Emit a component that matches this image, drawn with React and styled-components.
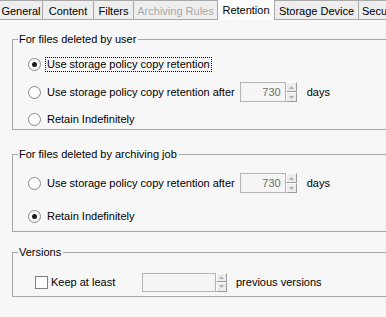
import React from "react";
import styled, { createGlobalStyle } from "styled-components";

const Global = createGlobalStyle`
  html, body { margin: 0; padding: 0; }
  body {
    background: #f7f7f7;
    font-family: "Liberation Sans", Arial, sans-serif;
    font-size: 11px;
    color: #000;
    overflow: hidden;
    width: 386px;
    height: 317px;
  }
`;

const Page = styled.div`
  width: 386px;
  height: 317px;
  overflow: hidden;
  background: #f7f7f7;
`;

const TabStrip = styled.div`
  display: flex;
  height: 20px;
  white-space: nowrap;
`;

const Tab = styled.div`
  flex: none;
  box-sizing: border-box;
  width: ${(p) => p.$w}px;
  height: 20px;
  display: flex;
  align-items: center;
  justify-content: ${(p) => (p.$last ? "flex-start" : "center")};
  padding-left: ${(p) => (p.$last ? 3 : 0)}px;
  background: ${(p) => (p.$active ? "#fdfdfd" : "#eeeeee")};
  border: 1px solid #a8a8a8;
  border-bottom: ${(p) => (p.$active ? "none" : "1px solid #a8a8a8")};
  border-top: ${(p) => (p.$active ? "none" : "1px solid #a8a8a8")};
  border-left: ${(p) => (p.$first ? "none" : "1px solid #a8a8a8")};
  border-right: ${(p) => (p.$last ? "none" : "1px solid #a8a8a8")};
  color: ${(p) => (p.$disabled ? "#a9a9a9" : "#000")};
  padding-top: ${(p) => (p.$active ? 0 : 1)}px;
  overflow: hidden;
  margin-left: ${(p) => (p.$first ? 0 : -1)}px;
`;

const Panel = styled.div`
  padding: 13px 0 0 12px;
  display: flex;
  flex-direction: column;
`;

const Group = styled.fieldset`
  margin: ${(p) => p.$mt || 0}px 0 0 0;
  width: 400px;
  box-sizing: border-box;
  border: 1px solid #a6a6a6;
  padding: ${(p) => p.$pt}px 0 ${(p) => p.$pb}px 5px;
  min-width: 0;
`;

const Legend = styled.legend`
  padding: 0 2px 0 1px;
  line-height: 13px;
  height: 13px;
`;

const Rows = styled.div`
  display: flex;
  flex-direction: column;
  gap: ${(p) => p.$gap}px;
  padding-left: ${(p) => p.$indent}px;
`;

const Row = styled.div`
  display: flex;
  align-items: center;
  height: 20px;
  margin-top: ${(p) => p.$mt || 0}px;
`;

const RadioCircle = styled.span`
  flex: none;
  box-sizing: border-box;
  width: 13px;
  height: 13px;
  border-radius: 50%;
  border: 1px solid #8a8a8a;
  background: radial-gradient(circle at 40% 40%, #ffffff 0%, #ffffff 45%, #e4e4e4 100%);
  display: flex;
  align-items: center;
  justify-content: center;
  margin-right: 4px;
  &::after {
    content: "";
    width: 5px;
    height: 5px;
    border-radius: 50%;
    background: #1c1c1c;
    display: ${(p) => (p.$checked ? "block" : "none")};
  }
`;

const CheckBox = styled.span`
  flex: none;
  box-sizing: border-box;
  width: 13px;
  height: 13px;
  border: 1px solid #7f7f7f;
  background: #fff;
  margin-right: 1px;
`;

const Label = styled.span`
  white-space: nowrap;
  line-height: 13px;
  padding: 0 1px;
  border: 1px dotted ${(p) => (p.$focus ? "#000" : "transparent")};
  width: ${(p) => (p.$w ? `${p.$w}px` : "auto")};
  flex: none;
`;

const Spin = styled.div`
  display: flex;
  margin-left: ${(p) => p.$ml}px;
  margin-right: ${(p) => p.$mr}px;
`;

const Field = styled.div`
  box-sizing: border-box;
  width: ${(p) => p.$w}px;
  height: ${(p) => p.$h}px;
  border: 1px solid #b4b4b4;
  background: #f5f5f5;
  color: #6d6d6d;
  display: flex;
  align-items: center;
  justify-content: flex-end;
  padding-right: 4px;
`;

const SpinButtons = styled.div`
  display: flex;
  flex-direction: column;
  width: 11px;
`;

const SpinBtn = styled.div`
  flex: 1;
  box-sizing: border-box;
  background: #ececec;
  border-top: 1px solid #fdfdfd;
  border-left: 1px solid #fdfdfd;
  border-right: 1px solid #9a9a9a;
  border-bottom: 1px solid #9a9a9a;
  display: flex;
  align-items: center;
  justify-content: center;
`;

const Arrow = ({ up }) => (
  <svg width="5" height="3" viewBox="0 0 5 3">
    <path d={up ? "M0 3 L2.5 0 L5 3 Z" : "M0 0 L2.5 3 L5 0 Z"} fill="#b0b0b0" />
  </svg>
);

const Spinner = ({ value, w = 46, h = 20, ml = 3, mr = 8 }) => (
  <Spin $ml={ml} $mr={mr}>
    <Field $w={w} $h={h}>{value}</Field>
    <SpinButtons>
      <SpinBtn>
        <Arrow up />
      </SpinBtn>
      <SpinBtn>
        <Arrow />
      </SpinBtn>
    </SpinButtons>
  </Spin>
);

const tabs = [
  { label: "General", w: 43 },
  { label: "Content", w: 52 },
  { label: "Filters", w: 41 },
  { label: "Archiving Rules", w: 85, disabled: true },
  { label: "Retention", w: 58, active: true },
  { label: "Storage Device", w: 85 },
  { label: "Secu", w: 30, last: true },
];

export default function App() {
  return (
    <Page>
      <Global />
      <TabStrip>
        {tabs.map((t, i) => (
          <Tab
            key={t.label}
            $w={t.w}
            $first={i === 0}
            $last={t.last}
            $active={t.active}
            $disabled={t.disabled}
          >
            {t.label}
          </Tab>
        ))}
      </TabStrip>
      <Panel>
        <Group $pt={8} $pb={0}>
          <Legend>For files deleted by user</Legend>
          <Rows $gap={7} $indent={10}>
            <Row>
              <RadioCircle $checked />
              <Label $focus>Use storage policy copy retention</Label>
            </Row>
            <Row $mt={1}>
              <RadioCircle />
              <Label>Use storage policy copy retention after</Label>
              <Spinner value="730" />
              <Label>days</Label>
            </Row>
            <Row>
              <RadioCircle />
              <Label>Retain Indefinitely</Label>
            </Row>
          </Rows>
        </Group>
        <Group $mt={18} $pt={12} $pb={5}>
          <Legend>For files deleted by archiving job</Legend>
          <Rows $gap={13} $indent={10}>
            <Row>
              <RadioCircle />
              <Label>Use storage policy copy retention after</Label>
              <Spinner value="730" />
              <Label>days</Label>
            </Row>
            <Row>
              <RadioCircle $checked />
              <Label>Retain Indefinitely</Label>
            </Row>
          </Rows>
        </Group>
        <Group $mt={14} $pt={13} $pb={4}>
          <Legend>Versions</Legend>
          <Rows $gap={0} $indent={17}>
            <Row>
              <CheckBox />
              <Label $w={89}>Keep at least</Label>
              <Spinner value="" w={74} h={19} ml={0} mr={7} />
              <Label>previous versions</Label>
            </Row>
          </Rows>
        </Group>
      </Panel>
    </Page>
  );
}
